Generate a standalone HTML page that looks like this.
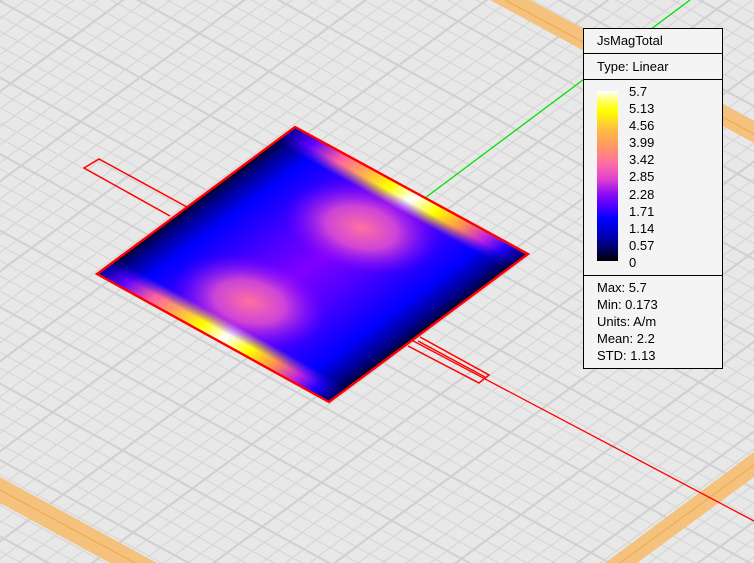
<!DOCTYPE html>
<html><head><meta charset="utf-8"><style>
html,body{margin:0;padding:0;width:754px;height:563px;overflow:hidden;background:#e8e8e8}
svg{position:absolute;left:0;top:0}
.leg{position:absolute;left:583px;top:28px;width:138px;height:339px;background:#f4f4f4;border:1px solid #000;font-family:"Liberation Sans",sans-serif;font-size:13px;color:#000}
.row{position:absolute;left:0;width:138px;border-bottom:1px solid #000}
.t{position:absolute;left:13px;white-space:nowrap}
.bar{position:absolute;left:13px;top:62px;width:21px;height:170px;background:linear-gradient(to bottom,#ffffff 0%,#ffff60 6%,#ffff00 12%,#ffc040 22%,#ff9a60 32%,#ff70a0 42%,#e040d0 52%,#9010f0 60%,#6000ff 66%,#0000ff 75%,#0000c0 84%,#000070 92%,#000000 100%)}
.lab{position:absolute;left:45px;line-height:17.1px}
</style></head><body>
<svg width="754" height="563" viewBox="0 0 754 563">
<defs>
<pattern id="g1" width="12" height="12" patternUnits="userSpaceOnUse" patternTransform="matrix(1.165,0.635,-0.99,0.735,0,0)">
<path d="M0 0.5H12M0.5 0V12" stroke="#d6d6d6" stroke-width="1" fill="none"/>
</pattern>
<pattern id="g2" width="60" height="60" patternUnits="userSpaceOnUse" patternTransform="matrix(1.165,0.635,-0.99,0.735,0,0)">
<path d="M0 1H60M1 0V60" stroke="#d0d0d0" stroke-width="1.6" fill="none"/>
</pattern>
<linearGradient id="base" x1="0" y1="0" x2="0" y2="1">
<stop offset="0" stop-color="#000030"/><stop offset="0.05" stop-color="#000090"/>
<stop offset="0.14" stop-color="#0000ff"/><stop offset="0.35" stop-color="#5000ff"/>
<stop offset="0.5" stop-color="#8000ff"/><stop offset="0.65" stop-color="#5000ff"/>
<stop offset="0.86" stop-color="#0000ff"/>
<stop offset="0.95" stop-color="#000090"/><stop offset="1" stop-color="#000030"/>
</linearGradient>
<linearGradient id="edge" x1="0" y1="0" x2="0" y2="1">
<stop offset="0" stop-color="#0000a0"/><stop offset="0.1" stop-color="#6000ff"/>
<stop offset="0.22" stop-color="#ff60a0"/><stop offset="0.35" stop-color="#ffc040"/>
<stop offset="0.43" stop-color="#ffff00"/><stop offset="0.53" stop-color="#ffffff"/>
<stop offset="0.63" stop-color="#ffff00"/><stop offset="0.74" stop-color="#ff9050"/>
<stop offset="0.84" stop-color="#c020e0"/><stop offset="0.92" stop-color="#2000ff"/>
<stop offset="1" stop-color="#000060"/>
</linearGradient>
<linearGradient id="fadeL" x1="0" y1="0" x2="1" y2="0">
<stop offset="0" stop-color="#fff"/><stop offset="0.45" stop-color="#fff"/><stop offset="1" stop-color="#000"/>
</linearGradient>
<linearGradient id="fadeR" x1="1" y1="0" x2="0" y2="0">
<stop offset="0" stop-color="#fff"/><stop offset="0.45" stop-color="#fff"/><stop offset="1" stop-color="#000"/>
</linearGradient>
<mask id="mL"><rect x="0" y="0" width="10" height="100" fill="url(#fadeL)"/></mask>
<mask id="mR"><rect x="90" y="0" width="10" height="100" fill="url(#fadeR)"/></mask>
<radialGradient id="blob">
<stop offset="0" stop-color="#ff70a0" stop-opacity="1"/><stop offset="0.45" stop-color="#e050d0" stop-opacity="0.85"/>
<stop offset="1" stop-color="#8000ff" stop-opacity="0"/>
</radialGradient>
</defs>
<rect width="754" height="563" fill="url(#g1)"/>
<rect width="754" height="563" fill="url(#g2)"/>
<polygon points="490,0 530,0 754,121 754,143" fill="#f4c27d"/>
<line x1="505" y1="0" x2="754" y2="134" stroke="#f0a848" stroke-width="1"/>
<polygon points="0,477 0,503 110,563 157,563" fill="#f4c27d"/>
<line x1="0" y1="490" x2="135" y2="563" stroke="#f0a848" stroke-width="1"/>
<polygon points="605,563 637,563 754,477 754,452" fill="#f4c27d"/>
<line x1="620" y1="563" x2="754" y2="465" stroke="#f0a848" stroke-width="1"/>
<line x1="425" y1="198" x2="690" y2="0" stroke="#00e000" stroke-width="1.3"/>
<line x1="400" y1="334" x2="754" y2="521" stroke="#ff0000" stroke-width="1.3"/>
<g fill="none" stroke="#ff0000" stroke-width="1.5">
<polyline points="187,207 99,159 84,168 170,216"/>
<polyline points="420,337 489,375 479,383 408,346"/>
<polyline points="418,341 485,377"/>
</g>
<g transform="matrix(1.98,-1.47,2.32,1.28,97,274)">
<rect x="0" y="0" width="100" height="100" fill="url(#base)"/>
<ellipse cx="22" cy="47" rx="22" ry="28" fill="url(#blob)"/>
<ellipse cx="75" cy="50" rx="22" ry="28" fill="url(#blob)"/>
<rect x="0" y="0" width="10" height="100" fill="url(#edge)" mask="url(#mL)"/>
<rect x="90" y="0" width="10" height="100" fill="url(#edge)" mask="url(#mR)"/>
</g>
<polygon points="97,274 295,127 528,254 329,402" fill="none" stroke="#ff0000" stroke-width="2.4"/>
</svg>
<div class="leg">
<div class="row" style="top:0;height:24px"><span class="t" style="top:4px">JsMagTotal</span></div>
<div class="row" style="top:25px;height:25px"><span class="t" style="top:5px">Type: Linear</span></div>
<div class="bar"></div>
<div class="lab" style="top:54px">5.7<br>5.13<br>4.56<br>3.99<br>3.42<br>2.85<br>2.28<br>1.71<br>1.14<br>0.57<br>0</div>
<div class="row" style="top:246px;height:0"></div>
<div class="t" style="top:250px;line-height:17.1px">Max: 5.7<br>Min: 0.173<br>Units: A/m<br>Mean: 2.2<br>STD: 1.13</div>
</div>
</body></html>
